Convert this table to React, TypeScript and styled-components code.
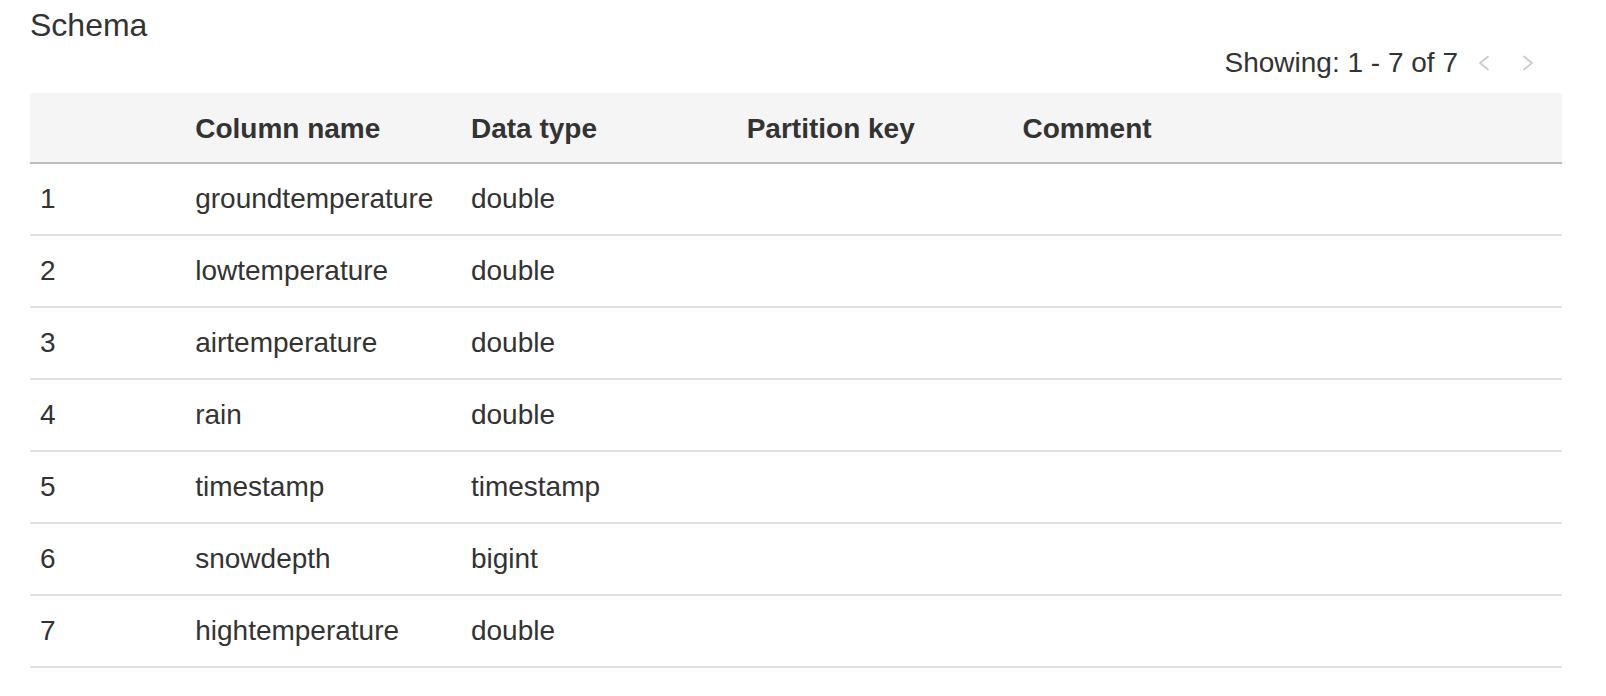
import React from "react";
import styled, { createGlobalStyle } from "styled-components";

const GlobalStyle = createGlobalStyle`
  html, body {
    margin: 0;
    padding: 0;
    background: #ffffff;
  }
  body {
    font-family: "Liberation Sans", Arial, Helvetica, sans-serif;
    color: #333333;
  }
`;

const Page = styled.div`
  padding: 7px 44px 0 30px;
  display: flex;
  flex-direction: column;
`;

const Title = styled.h2`
  margin: 0;
  font-size: 32px;
  line-height: 36px;
  font-weight: 400;
  color: #333333;
`;

const Pager = styled.div`
  margin-top: 2px;
  display: flex;
  justify-content: flex-end;
  align-items: center;
  padding-right: 22px;
  height: 36px;
`;

const PagerText = styled.span`
  font-size: 28px;
  line-height: 36px;
  color: #333333;
  margin-right: 14px;
`;

const PagerButton = styled.button<{ $gap?: number }>`
  width: 24px;
  height: 36px;
  padding: 0;
  border: none;
  background: transparent;
  display: flex;
  align-items: center;
  justify-content: center;
  margin-left: ${(p) => p.$gap ?? 0}px;
  cursor: default;
`;

const Table = styled.div`
  margin-top: 12px;
  display: flex;
  flex-direction: column;
`;

const Row = styled.div<{ $head?: boolean }>`
  display: grid;
  grid-template-columns: 10% 18% 18% 18% 36%;
  align-items: center;
  height: ${(p) => (p.$head ? 71 : 72)}px;
  box-sizing: border-box;
  background: ${(p) => (p.$head ? "#f5f5f5" : "#ffffff")};
  border-bottom: 2px solid ${(p) => (p.$head ? "#bdbdbd" : "#e0e0e0")};
`;

const Cell = styled.div<{ $head?: boolean; $first?: boolean }>`
  padding-left: ${(p) => (p.$first ? 10 : 12)}px;
  padding-top: ${(p) => (p.$head ? 3 : 0)}px;
  font-size: 28px;
  line-height: 36px;
  font-weight: ${(p) => (p.$head ? 700 : 400)};
  color: #333333;
  white-space: nowrap;
  overflow: hidden;
`;

const Chevron = ({ dir }: { dir: "left" | "right" }) => (
  <svg width="14" height="16" viewBox="0 0 14 16" fill="none">
    <polyline
      points={dir === "left" ? "11,1.5 3,8 11,14.5" : "3,1.5 11,8 3,14.5"}
      stroke="#cccccc"
      strokeWidth="1.8"
      strokeLinecap="round"
      strokeLinejoin="round"
    />
  </svg>
);

const rows: [string, string][] = [
  ["groundtemperature", "double"],
  ["lowtemperature", "double"],
  ["airtemperature", "double"],
  ["rain", "double"],
  ["timestamp", "timestamp"],
  ["snowdepth", "bigint"],
  ["hightemperature", "double"],
];

export default function App() {
  return (
    <>
      <GlobalStyle />
      <Page>
        <Title>Schema</Title>
        <Pager>
          <PagerText>Showing: 1 - 7 of 7</PagerText>
          <PagerButton aria-label="Previous page">
            <Chevron dir="left" />
          </PagerButton>
          <PagerButton aria-label="Next page" $gap={20}>
            <Chevron dir="right" />
          </PagerButton>
        </Pager>
        <Table>
          <Row $head>
            <Cell $head $first></Cell>
            <Cell $head>Column name</Cell>
            <Cell $head>Data type</Cell>
            <Cell $head>Partition key</Cell>
            <Cell $head>Comment</Cell>
          </Row>
          {rows.map(([name, type], i) => (
            <Row key={name}>
              <Cell $first>{i + 1}</Cell>
              <Cell>{name}</Cell>
              <Cell>{type}</Cell>
              <Cell></Cell>
              <Cell></Cell>
            </Row>
          ))}
        </Table>
      </Page>
    </>
  );
}
